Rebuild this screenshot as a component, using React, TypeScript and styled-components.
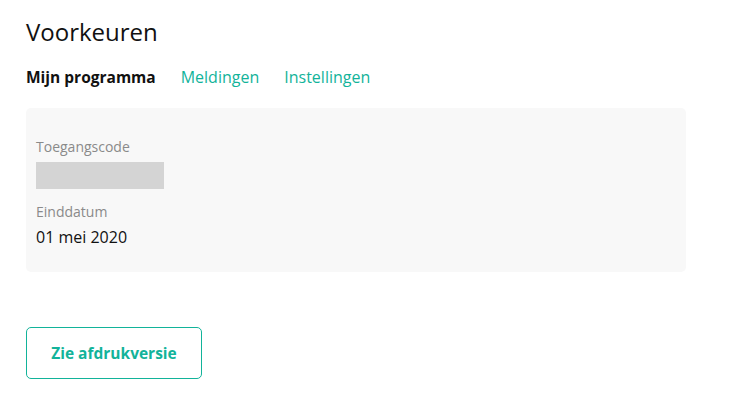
import React from 'react';
import styled, { createGlobalStyle } from 'styled-components';

const GlobalStyle = createGlobalStyle`
  body {
    margin: 0;
    background: #ffffff;
    font-family: 'Open Sans', 'Liberation Sans', sans-serif;
    color: #111111;
  }
`;

const teal = '#12b39a';

const Page = styled.div`
  padding: 16px 26px 0 26px;
  width: 660px;
`;

const Title = styled.h1`
  margin: 0;
  font-size: 24px;
  font-weight: 400;
  line-height: 32px;
  color: #111;
`;

const Tabs = styled.nav`
  display: flex;
  gap: 25px;
  margin-top: 18px;
  height: 22px;
  align-items: center;
`;

const Tab = styled.span<{ $active?: boolean }>`
  font-size: ${({ $active }) => ($active ? '15.5px' : '16px')};
  line-height: 22px;
  font-weight: ${({ $active }) => ($active ? 700 : 400)};
  color: ${({ $active }) => ($active ? '#111' : teal)};
  cursor: pointer;
`;

const Card = styled.section`
  margin-top: 20px;
  background: #f8f8f8;
  border-radius: 5px;
  padding: 29px 10px 26px;
  height: 164px;
  box-sizing: border-box;
`;

const Label = styled.div`
  font-size: 14px;
  line-height: 19px;
  color: #8a8a8a;
`;

const Hidden = styled.div`
  width: 128px;
  height: 27px;
  background: #d4d4d4;
  margin-top: 6px;
  margin-bottom: 13px;
`;

const Value = styled.div`
  font-size: 16px;
  line-height: 21px;
  color: #111;
  margin-top: 6px;
`;

const PrintButton = styled.button`
  margin-top: 55px;
  width: 176px;
  height: 52px;
  border: 1px solid ${teal};
  border-radius: 5px;
  background: #fff;
  color: ${teal};
  font-family: 'Open Sans', 'Liberation Sans', sans-serif;
  font-size: 15.5px;
  font-weight: 700;
  cursor: pointer;
`;

export default function App() {
  return (
    <>
      <GlobalStyle />
      <Page>
        <Title>Voorkeuren</Title>
        <Tabs>
          <Tab $active>Mijn programma</Tab>
          <Tab>Meldingen</Tab>
          <Tab>Instellingen</Tab>
        </Tabs>
        <Card>
          <Label>Toegangscode</Label>
          <Hidden />
          <Label>Einddatum</Label>
          <Value>01 mei 2020</Value>
        </Card>
        <PrintButton>Zie afdrukversie</PrintButton>
      </Page>
    </>
  );
}
